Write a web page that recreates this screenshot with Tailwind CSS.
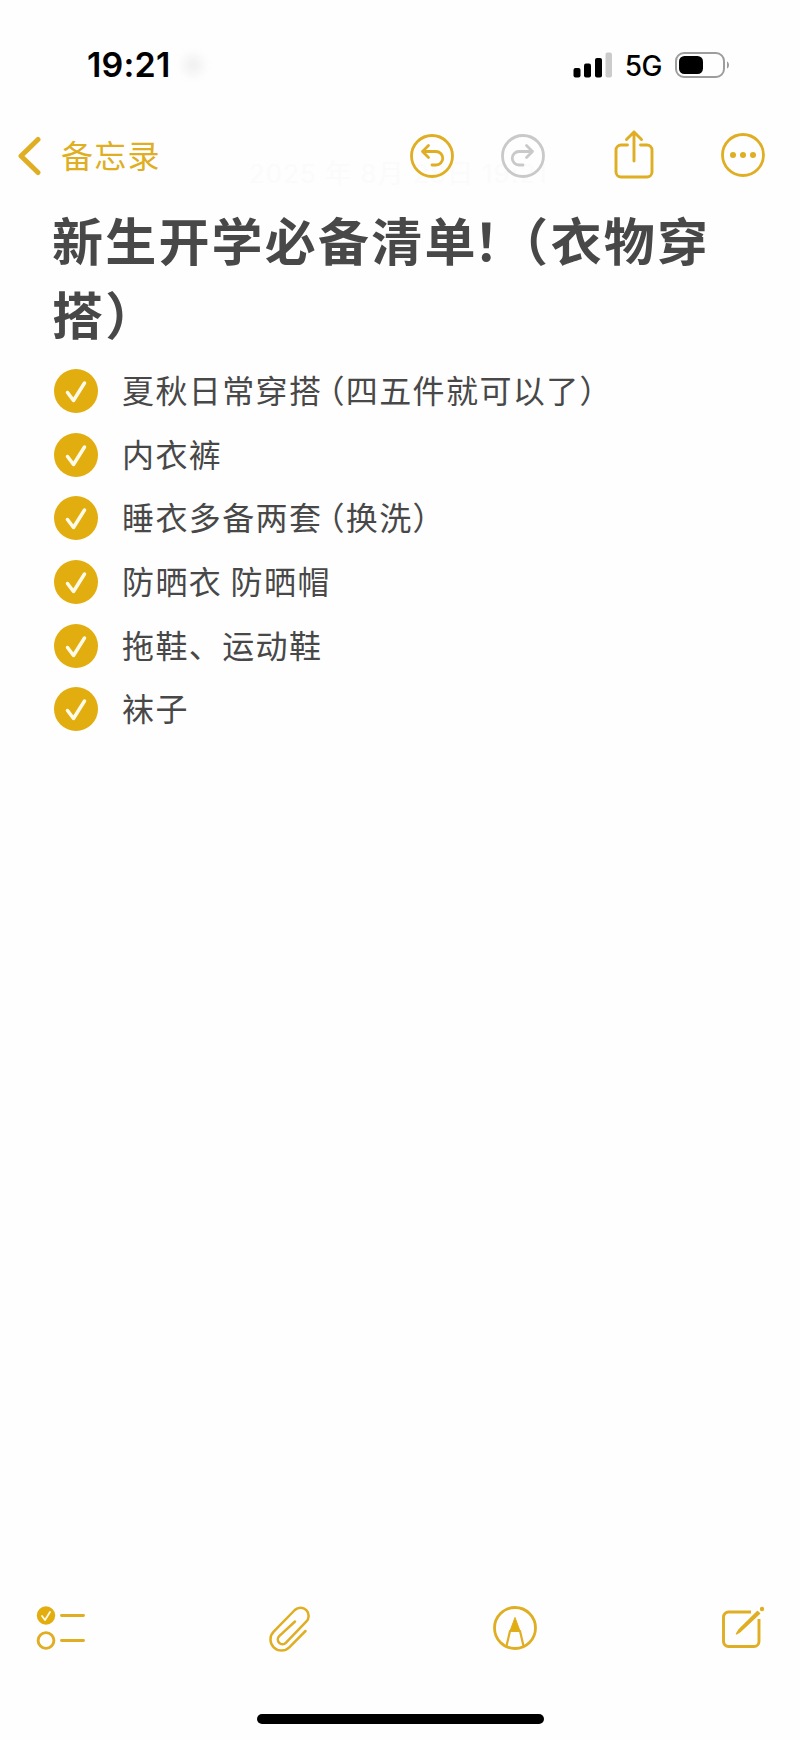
<!doctype html>
<html lang="zh-CN">
  <head>
    <meta charset="UTF-8" />
    <meta name="viewport" content="width=device-width, initial-scale=1.0" />
    <title>备忘录</title>
    <script src="https://cdn.jsdelivr.net/npm/@tailwindcss/browser@4"></script>
  </head>
  <body class="bg-[#fefefe] font-['Inter','Noto_Sans_CJK_SC',sans-serif]">
    <div class="flex h-[1740px] w-[800px] flex-col overflow-hidden">
      <!-- status bar -->
      <header class="flex h-[130px] items-center justify-between pl-[87px] pr-[69px]">
        <div class="flex items-center">
          <span class="text-[34px] font-semibold leading-none tracking-[0.2px] text-black">19:21</span>
          <span class="ml-[12px] h-5 w-5 rounded-full bg-[#f1f1f1] blur-[5px]"></span>
        </div>
        <div class="flex items-center">
          <svg class="h-[26px] w-[40px]" viewBox="0 0 40 26">
            <rect x="0.500" y="16" width="7" height="9.500" rx="2" />
            <rect x="11" y="11.500" width="7" height="14" rx="2" />
            <rect x="22" y="6" width="7" height="19.500" rx="2" />
            <rect x="32.500" y="0.500" width="6.500" height="25" rx="2" fill="#cbcbcb" />
          </svg>
          <span class="ml-[12px] mt-[2px] text-[28px] font-medium leading-none tracking-[-0.5px] text-black">5G</span>
          <svg class="ml-[13px] h-[26px] w-[56px]" viewBox="0 0 56 26">
            <rect x="1" y="1" width="48" height="24" rx="8" fill="none" stroke="#9d9d9d" stroke-width="2" />
            <rect x="4" y="4" width="24" height="18" rx="5.500" />
            <path d="M52 9.500c2.700 1 2.700 6 0 7z" fill="#9d9d9d" />
          </svg>
        </div>
      </header>

      <!-- navigation -->
      <nav class="flex h-[52px] items-center pl-[17px] pr-[35px] text-[#dfae23]">
        <a href="#" class="flex items-center">
          <svg class="h-[40px] w-[26px]" viewBox="0 0 26 40" fill="none" stroke="currentColor" stroke-width="5" stroke-linecap="round" stroke-linejoin="round">
            <path d="M21 3.500 4 20l17 16.500" />
          </svg>
          <span class="ml-[18px] mt-[2px] text-[32px] leading-none tracking-[1.300px]">备忘录</span>
        </a>
        <div class="ml-auto flex items-center">
          <svg class="h-[44px] w-[44px]" viewBox="0 0 44 44" fill="none" stroke="currentColor" stroke-width="2.800" stroke-linecap="round" stroke-linejoin="round">
            <circle cx="22" cy="22" r="20.500" />
            <path d="m18.500 11.500-6 6 6 6M12.500 17.500h13.500a6.700 6.700 0 0 1 0 13.500h-4" />
          </svg>
          <svg class="ml-[47px] h-[44px] w-[44px] text-[#c9c9c9]" viewBox="0 0 44 44" fill="none" stroke="currentColor" stroke-width="2.800" stroke-linecap="round" stroke-linejoin="round">
            <circle cx="22" cy="22" r="20.500" />
            <path d="m25.500 11.500 6 6-6 6M31.500 17.500h-13.500a6.700 6.700 0 0 0 0 13.500h4" />
          </svg>
          <svg class="-mt-[4px] ml-[69px] h-[50px] w-[40px]" viewBox="0 0 40 50" fill="none" stroke="currentColor" stroke-width="2.900" stroke-linecap="round" stroke-linejoin="round">
            <path d="M13.500 16H7a5 5 0 0 0-5 5v22a5 5 0 0 0 5 5h26a5 5 0 0 0 5-5V21a5 5 0 0 0-5-5h-6.500M20 32V3M12.500 10.500 20 3l7.500 7.500" />
          </svg>
          <svg class="-mt-[2px] ml-[67px] h-[44px] w-[44px]" viewBox="0 0 44 44" fill="none" stroke="currentColor" stroke-width="2.800">
            <circle cx="22" cy="22" r="20.500" />
            <g fill="currentColor" stroke="none">
              <circle cx="12" cy="22" r="3" />
              <circle cx="22" cy="22" r="3" />
              <circle cx="32" cy="22" r="3" />
            </g>
          </svg>
        </div>
      </nav>

      <!-- note -->
      <main class="relative flex-1 pl-[52px] text-[#484848]">
        <p class="absolute left-[249px] top-[-27px] -z-10 whitespace-nowrap text-[26px] leading-[38px] tracking-[1px] text-[#fbfbfb]">2025 年 8月 28日 19:21</p>
        <h1 class="mt-[24px] text-[51px] font-bold leading-[74px] tracking-[2.200px]">
          新生开学必备清单<span class="inline-block w-[45px] -indent-[4px]">！</span><span class="inline-block w-[28px] [font-feature-settings:'halt']">（</span>衣物穿<br />搭）
        </h1>
        <ul class="mt-[5px] text-[32px] tracking-[1.400px]">
          <li class="flex h-[63.700px] items-center gap-[24px]">
            <svg class="ml-[2px] h-[44px] w-[44px] shrink-0" viewBox="0 0 44 44"><circle cx="22" cy="22" r="22" fill="#e2ad0e" /><path d="m13.500 23.500 6 8L30.500 14" fill="none" stroke="#fffbe8" stroke-width="3.500" stroke-linecap="round" stroke-linejoin="round" /></svg>
            <span class="mt-[2px]">夏秋日常穿搭<span class="ml-[6px] [font-feature-settings:'halt']">（</span>四五件就可以了）</span>
          </li>
          <li class="flex h-[63.700px] items-center gap-[24px]">
            <svg class="ml-[2px] h-[44px] w-[44px] shrink-0" viewBox="0 0 44 44"><circle cx="22" cy="22" r="22" fill="#e2ad0e" /><path d="m13.500 23.500 6 8L30.500 14" fill="none" stroke="#fffbe8" stroke-width="3.500" stroke-linecap="round" stroke-linejoin="round" /></svg>
            <span class="mt-[2px]">内衣裤</span>
          </li>
          <li class="flex h-[63.700px] items-center gap-[24px]">
            <svg class="ml-[2px] h-[44px] w-[44px] shrink-0" viewBox="0 0 44 44"><circle cx="22" cy="22" r="22" fill="#e2ad0e" /><path d="m13.500 23.500 6 8L30.500 14" fill="none" stroke="#fffbe8" stroke-width="3.500" stroke-linecap="round" stroke-linejoin="round" /></svg>
            <span class="mt-[2px]">睡衣多备两套<span class="ml-[6px] [font-feature-settings:'halt']">（</span>换洗）</span>
          </li>
          <li class="flex h-[63.700px] items-center gap-[24px]">
            <svg class="ml-[2px] h-[44px] w-[44px] shrink-0" viewBox="0 0 44 44"><circle cx="22" cy="22" r="22" fill="#e2ad0e" /><path d="m13.500 23.500 6 8L30.500 14" fill="none" stroke="#fffbe8" stroke-width="3.500" stroke-linecap="round" stroke-linejoin="round" /></svg>
            <span class="mt-[2px] [word-spacing:-2px]">防晒衣 防晒帽</span>
          </li>
          <li class="flex h-[63.700px] items-center gap-[24px]">
            <svg class="ml-[2px] h-[44px] w-[44px] shrink-0" viewBox="0 0 44 44"><circle cx="22" cy="22" r="22" fill="#e2ad0e" /><path d="m13.500 23.500 6 8L30.500 14" fill="none" stroke="#fffbe8" stroke-width="3.500" stroke-linecap="round" stroke-linejoin="round" /></svg>
            <span class="mt-[2px]">拖鞋、运动鞋</span>
          </li>
          <li class="flex h-[63.700px] items-center gap-[24px]">
            <svg class="ml-[2px] h-[44px] w-[44px] shrink-0" viewBox="0 0 44 44"><circle cx="22" cy="22" r="22" fill="#e2ad0e" /><path d="m13.500 23.500 6 8L30.500 14" fill="none" stroke="#fffbe8" stroke-width="3.500" stroke-linecap="round" stroke-linejoin="round" /></svg>
            <span class="mt-[2px]">袜子</span>
          </li>
        </ul>
      </main>

      <!-- toolbar -->
      <footer class="flex h-[136px] flex-col items-center justify-between pb-[16px] text-[#dfae23]">
        <div class="flex h-[48px] w-full items-center pl-[36px]">
          <svg class="h-[46px] w-[50px]" viewBox="0 0 50 46" fill="none" stroke="currentColor" stroke-width="2.900" stroke-linecap="round" stroke-linejoin="round">
            <circle cx="10" cy="10.500" r="9.200" fill="#e2ad0e" stroke="none" />
            <path d="m6 11 3 4 5-8" stroke="#fffbe8" stroke-width="1.800" />
            <circle cx="10" cy="35.500" r="7.900" />
            <path d="M25.500 10.500h22M25.500 35.500h22" />
          </svg>
          <svg class="ml-[182px] h-[48px] w-[44px]" viewBox="0 0 44 48" fill="none" stroke="currentColor" stroke-width="2.500" stroke-linecap="round" stroke-linejoin="round">
            <path d="M27 17.500 11.200 32.200a4.600 4.600 0 0 0 6.600 6.600L38.200 17.700A8 8 0 0 0 26.800 6L5.700 27.700A11 11 0 0 0 21.300 43.300L37.500 27" />
          </svg>
          <svg class="ml-[181px] h-[44px] w-[44px]" viewBox="0 0 44 44" fill="none" stroke="currentColor" stroke-width="2.800" stroke-linejoin="round">
            <circle cx="22" cy="22" r="20.500" />
            <path d="m13.500 40 3.500-15h10l3.500 15" stroke-width="2.200" />
            <path d="M22 11.500 27 25H17z" fill="#e2ad0e" stroke-width="1" />
          </svg>
          <svg class="ml-[183px] h-[44px] w-[46px]" viewBox="0 0 46 44" fill="none" stroke="currentColor" stroke-width="2.900">
            <path d="M31 6H8.500A5 5 0 0 0 3.500 11v24.500a5 5 0 0 0 5 5H34a5 5 0 0 0 5-5V13" />
            <path d="M37.500 5.500 19 23.800l-2.500 4 4-2.500L39.500 7.500z" fill="currentColor" stroke-width="1.500" stroke-linejoin="round" />
            <circle cx="42" cy="3" r="2.200" fill="currentColor" stroke="none" />
          </svg>
        </div>
        <div class="h-[10px] w-[287px] rounded-full bg-black"></div>
      </footer>
    </div>
  </body>
</html>
